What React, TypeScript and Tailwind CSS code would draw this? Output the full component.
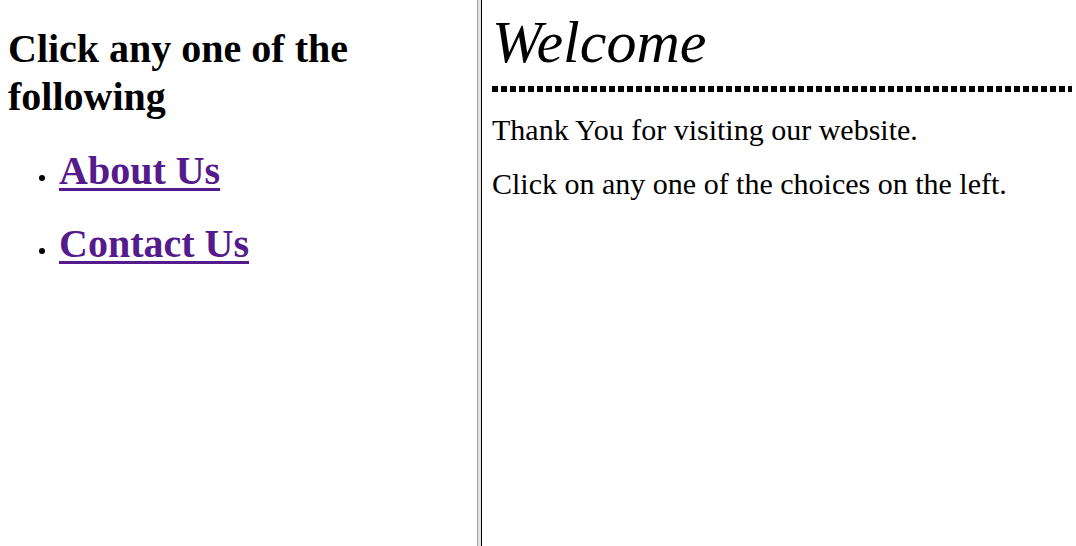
const LINKS = ["About Us", "Contact Us"];

function App() {
  return (
    <div className="flex h-screen w-full bg-white text-black font-['Liberation_Serif','Times_New_Roman',serif]">
      <div className="w-[477px] shrink-0 px-[8px] pt-[25px]">
        <h2 className="text-[40px] leading-[48px] font-bold">Click any one of the following</h2>
        <ul className="mt-[27px] flex flex-col gap-[27px]">
          {LINKS.map((label) => (
            <li key={label} className="flex items-baseline pl-[31px]">
              <span className="inline-block w-[6px] h-[6px] rounded-full bg-black -translate-y-[3px] mr-[14px]" />
              <a
                href="#"
                className="text-[40px] leading-[46px] font-bold text-[#551a8b] underline decoration-[3px] underline-offset-[4px]"
              >
                {label}
              </a>
            </li>
          ))}
        </ul>
      </div>

      <div className="flex shrink-0">
        <div className="w-px bg-[#a0a0a0]" />
        <div className="w-[3px] bg-[#e3e3e3]" />
        <div className="w-px bg-black" />
      </div>

      <div className="flex-1 pl-[10px] pr-[4px] pt-[9px]">
        <h1 className="text-[60px] leading-[66px] italic font-normal">Welcome</h1>
        <div className="mt-[11px] h-[6px] bg-[repeating-linear-gradient(90deg,#000_0_6px,transparent_6px_9px)]" />
        <p className="mt-[21px] text-[30px] leading-[34px]">Thank You for visiting our website.</p>
        <p className="mt-[20px] text-[30px] leading-[34px]">Click on any one of the choices on the left.</p>
      </div>
    </div>
  );
}

export default App;
